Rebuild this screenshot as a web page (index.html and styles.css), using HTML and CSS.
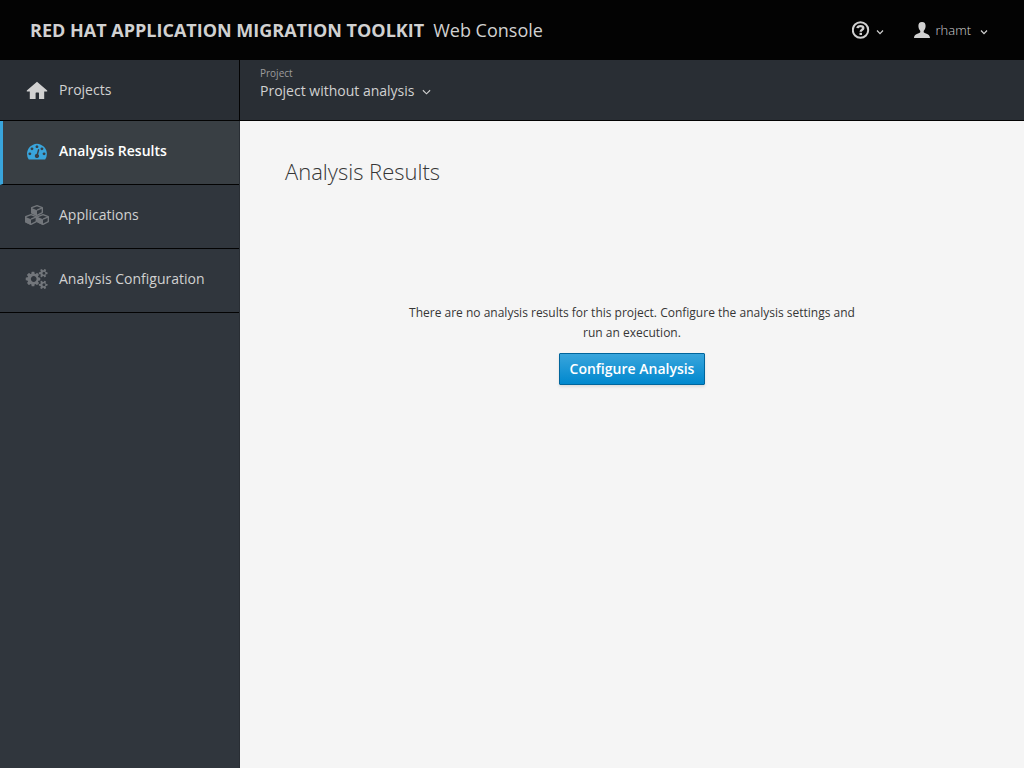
FILE: index.html
```html
<!DOCTYPE html>
<html lang="en">
<head>
<meta charset="utf-8">
<title>Red Hat Application Migration Toolkit Web Console</title>
<link rel="stylesheet" href="styles.css">
</head>
<body>
<header class="masthead">
  <a class="brand" href="#"><strong>RED HAT APPLICATION MIGRATION TOOLKIT</strong><span>Web Console</span></a>
  <div class="utilities">
    <button class="utility" type="button" aria-label="Help">
      <svg class="icon-help" viewBox="0 0 18 18" aria-hidden="true"><circle cx="8.500" cy="9" r="7.700" fill="none" stroke="currentColor" stroke-width="2"/><path d="M5.500 7.200C5.600 5.700 6.700 5.100 8.500 5.100c1.800 0 2.800.8 2.800 2C11.300 8.800 8.700 8.600 8.700 10.700" fill="none" stroke="currentColor" stroke-width="2.400"/><path d="M7.500 11.800h2.500v2.200H7.500z" fill="currentColor"/></svg>
      <svg class="caret" viewBox="0 0 8 6" aria-hidden="true"><path d="M1 1.500l3 3.200L7 1.500"/></svg>
    </button>
    <button class="utility" type="button">
      <svg class="icon-user" viewBox="0 0 16 16" aria-hidden="true"><path d="M8 0c2.500 0 3.700 1.600 3.600 4.100-.1 2.300-.7 3.600-1.800 4.700-.4 1.500.1 2 1.400 2.500 2.500.9 4.500 1.500 4.800 4.700H0c.3-3.200 2.300-3.800 4.800-4.700 1.300-.5 1.800-1 1.400-2.500C5.100 7.700 4.500 6.400 4.400 4.100 4.300 1.600 5.500 0 8 0z"/></svg>
      <span class="username">rhamt</span>
      <svg class="caret" viewBox="0 0 8 6" aria-hidden="true"><path d="M1 1.500l3 3.200L7 1.500"/></svg>
    </button>
  </div>
</header>
<div class="shell">
  <nav class="sidebar" aria-label="Main">
    <a class="item home" href="#">
      <svg class="item-icon" viewBox="0 0 24 24" aria-hidden="true"><path d="M12 3.800L22.200 12.400V13.600H19.200V21H14V15.200Q14 14.600 13.400 14.600H11.200Q10.600 14.600 10.600 15.200V21H4.800V13.600H1.800V12.400z"/></svg>
      <span>Projects</span>
    </a>
    <a class="item active" href="#" aria-current="page">
      <svg class="item-icon" viewBox="-180 -180 2160 2160" aria-hidden="true"><path d="M384 1152q0-53-37.500-90.500t-90.500-37.500-90.500 37.500-37.500 90.500 37.500 90.500 90.500 37.500 90.500-37.500 37.500-90.500zm192-448q0-53-37.500-90.500t-90.500-37.500-90.500 37.500-37.500 90.500 37.500 90.500 90.500 37.500 90.500-37.500 37.500-90.500zm428 481l101-382q6-26-7.500-48.500t-38.500-29.500-48 6.500-30 39.500l-101 382q-60 5-107 43.500t-63 98.500q-20 77 20 146t117 89 146-20 89-117q16-60-6-117t-72-91zm660-33q0-53-37.500-90.500t-90.500-37.500-90.500 37.500-37.500 90.500 37.500 90.500 90.500 37.500 90.500-37.500 37.500-90.500zm-640-640q0-53-37.500-90.500t-90.500-37.500-90.500 37.500-37.500 90.500 37.500 90.500 90.500 37.500 90.500-37.500 37.500-90.500zm448 192q0-53-37.500-90.500t-90.500-37.500-90.500 37.500-37.500 90.500 37.500 90.500 90.500 37.500 90.500-37.500 37.500-90.500zm320 448q0 261-141 483-19 29-54 29h-1402q-35 0-54-29-141-221-141-483 0-182 71-348t191-286 286-191 348-71 348 71 286 191 191 286 71 348z"/></svg>
      <span>Analysis Results</span>
    </a>
    <a class="item" href="#">
      <svg class="item-icon" viewBox="0 0 24 24" aria-hidden="true">
        <defs><g id="cube"><path d="M6 .8L11.300 2.900v5L6 10.500.7 8V2.900z" fill="none" stroke="currentColor" stroke-width="1.400" stroke-linejoin="round"/><path d="M0 2.900L6 5.400v5.700L.7 8.600z"/><path d="M6 5.400L11.300 3.100" fill="none" stroke="currentColor" stroke-width="1.300"/></g></defs>
        <use href="#cube" x="6" y="1.800"/><use href="#cube" x="0" y="10.800"/><use href="#cube" x="12" y="10.800"/>
      </svg>
      <span>Applications</span>
    </a>
    <a class="item" href="#">
      <svg class="item-icon" viewBox="-192 -160 2112 2112" aria-hidden="true"><path d="M832 896q0-106-75-181t-181-75-181 75-75 181 75 181 181 75 181-75 75-181zm768 512q0-52-38-90t-90-38-90 38-38 90q0 53 37.500 90.500t90.500 37.500 90.500-37.500 37.500-90.500zm0-1024q0-52-38-90t-90-38-90 38-38 90q0 53 37.500 90.500t90.500 37.500 90.500-37.500 37.500-90.500zm-448 421v185q0 10-7 19.500t-16 10.500l-155 24q-11 35-32 76 34 48 90 115 7 11 7 20 0 12-7 19-23 30-82.500 89.500t-78.500 59.500q-11 0-21-7l-115-90q-37 19-77 31-11 108-23 155-7 24-30 24h-186q-11 0-20-7.500t-10-17.500l-23-153q-34-10-75-31l-118 89q-7 7-20 7-11 0-21-8-144-133-144-160 0-9 7-19 10-14 41-53t47-61q-23-44-35-82l-152-24q-10-1-17-9.500t-7-19.500v-185q0-10 7-19.500t16-10.500l155-24q11-35 32-76-34-48-90-115-7-11-7-20 0-12 7-20 22-30 82-89t79-59q11 0 21 7l115 90q34-18 77-32 11-108 23-154 7-24 30-24h186q11 0 20 7.500t10 17.500l23 153q34 10 75 31l118-89q8-7 20-7 11 0 21 8 144 133 144 160 0 8-7 19-12 16-42 54t-45 60q23 48 34 82l152 23q10 2 17 10.500t7 19.500zm640 533v140q0 16-149 31-12 27-30 52 51 113 51 138 0 4-4 7-122 71-124 71-8 0-46-47t-52-68q-20 2-30 2t-30-2q-14 21-52 68t-46 47q-2 0-124-71-4-3-4-7 0-25 51-138-18-25-30-52-149-15-149-31v-140q0-16 149-31 13-29 30-52-51-113-51-138 0-4 4-7 4-2 35-20t59-34 30-16q8 0 46 46.500t52 67.500q20-2 30-2t30 2q51-71 92-112l6-2q4 0 124 70 4 3 4 7 0 25-51 138 17 23 30 52 149 15 149 31zm0-1024v140q0 16-149 31-12 27-30 52 51 113 51 138 0 4-4 7-122 71-124 71-8 0-46-47t-52-68q-20 2-30 2t-30-2q-14 21-52 68t-46 47q-2 0-124-71-4-3-4-7 0-25 51-138-18-25-30-52-149-15-149-31v-140q0-16 149-31 13-29 30-52-51-113-51-138 0-4 4-7 4-2 35-20t59-34 30-16q8 0 46 46.500t52 67.500q20-2 30-2t30 2q51-71 92-112l6-2q4 0 124 70 4 3 4 7 0 25-51 138 17 23 30 52 149 15 149 31z"/></svg>
      <span>Analysis Configuration</span>
    </a>
  </nav>
  <div class="content">
    <div class="context-bar">
      <span class="context-label" id="context-label">Project</span>
      <button class="context-select" type="button" aria-describedby="context-label">Project without analysis<svg class="caret-large" viewBox="0 0 10 7" aria-hidden="true"><path d="M1 1l4 4 4-4"/></svg></button>
    </div>
    <main class="page">
      <h1>Analysis Results</h1>
      <section class="empty">
        <p>There are no analysis results for this project. Configure the analysis settings and run an execution.</p>
        <button class="primary" type="button">Configure Analysis</button>
      </section>
    </main>
  </div>
</div>
</body>
</html>
```
FILE: styles.css
```css
* { box-sizing: border-box; }
body {
  margin: 0;
  min-height: 100vh;
  display: flex;
  flex-direction: column;
  font-family: "Open Sans", "Noto Sans", sans-serif;
  font-size: 12px;
  line-height: 20px;
  color: #363636;
  background: #f5f5f5;
}
a { color: inherit; text-decoration: none; }
button { font: inherit; color: inherit; background: none; border: 0; padding: 0; cursor: pointer; }
svg { display: block; flex: none; fill: currentColor; }

.masthead {
  height: 60px;
  display: flex;
  align-items: center;
  justify-content: space-between;
  padding: 0 36px 0 30px;
  background: #030303;
  color: #d1d1d1;
}
.brand { display: flex; gap: 9px; font-size: 18px; line-height: 24px; }
.brand strong { font-weight: 700; }
.utilities { display: flex; gap: 30px; }
.utility { display: flex; align-items: center; }
.icon-help { width: 18px; height: 18px; margin-right: 6px; }
.icon-user { width: 16px; height: 16px; margin-right: 6px; }
.username { font-size: 13px; font-weight: 300; margin-right: 9px; }
.caret { width: 8px; height: 6px; margin-top: 4px; }
.caret path, .caret-large path { fill: none; stroke: currentColor; stroke-width: 1.2; }

.shell { flex: 1; display: flex; }
.sidebar {
  width: 240px;
  flex: none;
  background: #30363d;
  border-right: 1px solid #292e34;
  color: #d1d1d1;
}
.item {
  display: flex;
  align-items: center;
  gap: 10px;
  height: 64px;
  padding: 0 10px 4px 25px;
  border-bottom: 1px solid #030303;
  font-size: 14px;
}
.item-icon { width: 24px; height: 24px; color: #72767b; }
.home { height: 61px; padding-bottom: 0; background: #292e34; margin-right: -1px; border-right: 1px solid #030303; }
.home .item-icon { color: #d1d1d1; }
.active { background: #393f44; color: #fff; font-weight: 600; border-left: 3px solid #39a5dc; padding-left: 22px; }
.active .item-icon { color: #39a5dc; }

.content { flex: 1; min-width: 0; }
.context-bar {
  height: 61px;
  display: flex;
  flex-direction: column;
  align-items: flex-start;
  padding: 6px 20px;
  background: #292e34;
  border-bottom: 1px solid #030303;
  color: #d1d1d1;
}
.context-label { font-size: 10px; line-height: 15px; color: #9c9c9c; }
.context-select { display: flex; align-items: center; gap: 8px; font-size: 14px; line-height: 20px; }
.caret-large { width: 9px; height: 7px; margin-top: 3px; }

.page { padding: 38px 45px; }
h1 { margin: 0; font-size: 22px; line-height: 24px; font-weight: 300; }
.empty { max-width: 460px; margin: 120px auto 0; text-align: center; }
.empty p { margin: 0 0 10px; }
.primary {
  height: 32px;
  padding: 0 10px;
  border: 1px solid #00659c;
  border-radius: 1px;
  background: linear-gradient(#39a5dc, #0088ce);
  box-shadow: 0 2px 3px rgba(3, 3, 3, 0.1);
  color: #fff;
  font-size: 14px;
  font-weight: 600;
}
```
